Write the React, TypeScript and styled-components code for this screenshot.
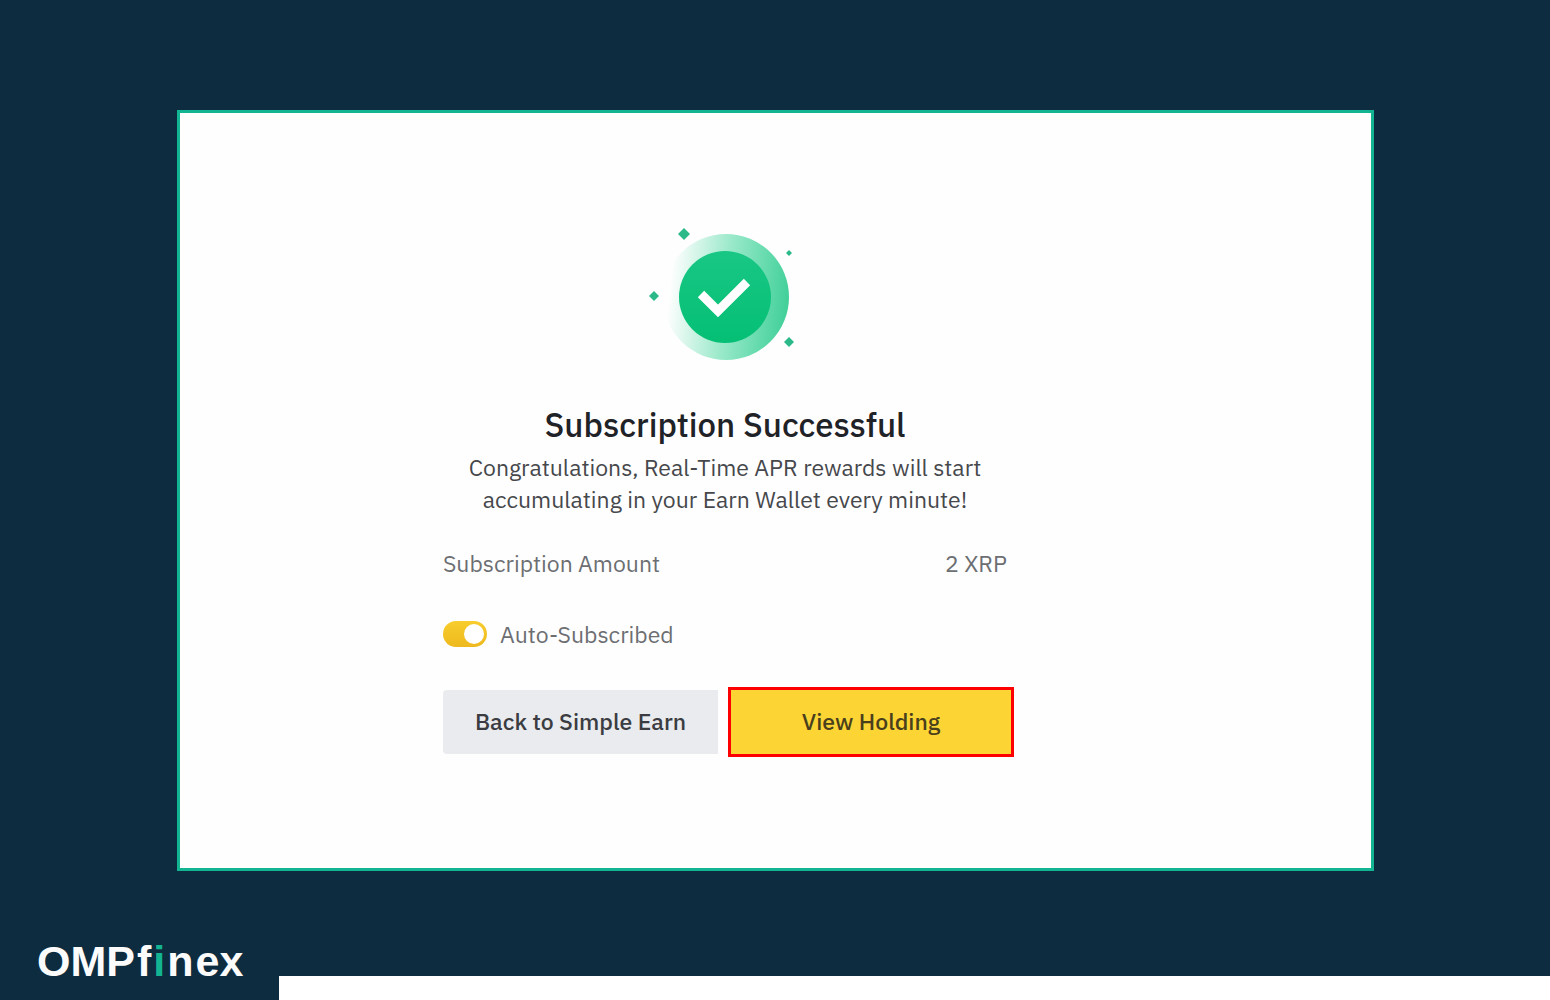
import React from "react";
import styled, { createGlobalStyle } from "styled-components";

const GlobalStyle = createGlobalStyle`
  *, *::before, *::after { box-sizing: border-box; }
  body {
    margin: 0;
    background: #0e2c40;
    font-family: "IBM Plex Sans", "Noto Sans", sans-serif;
  }
`;

const Page = styled.div`
  min-height: 100vh;
  display: flex;
  flex-direction: column;
  justify-content: space-between;
`;

const Main = styled.main`
  padding: 110px 176px 64px 177px;
`;

const Card = styled.section`
  display: flex;
  border: 3px solid #12b491;
  background: #fefefe;
  padding: 106px 32px 111px 263px;
`;

const Content = styled.div`
  flex: 0 1 571px;
  display: flex;
  flex-direction: column;
`;

const Summary = styled.div`
  display: flex;
  flex-direction: column;
  padding-right: 7px;
`;

const Illustration = styled.svg`
  display: block;
  align-self: center;
  width: 170px;
  height: 144px;
  margin-bottom: 42px;
`;

const Title = styled.h1`
  margin: 0 0 6px;
  font-size: 33px;
  font-weight: 500;
  line-height: 40px;
  text-align: center;
  color: #1f2226;
`;

const Message = styled.p`
  margin: 0 0 32px;
  font-size: 23px;
  line-height: 32px;
  text-align: center;
  color: #46484c;
`;

const Row = styled.div<{ $spread?: boolean }>`
  display: flex;
  align-items: center;
  justify-content: ${(p) => (p.$spread ? "space-between" : "flex-start")};
  gap: 13px;
  margin-bottom: ${(p) => (p.$spread ? "39px" : "37px")};
  font-size: 23px;
  line-height: 32px;
  color: #6c6e72;
`;

const Toggle = styled.input`
  appearance: none;
  width: 44px;
  height: 26px;
  margin: 0;
  padding: 3px;
  display: flex;
  justify-content: flex-start;
  border-radius: 13px;
  background: #d4d6da;
  cursor: pointer;
  &::before {
    content: "";
    width: 20px;
    height: 20px;
    border-radius: 50%;
    background: #fff;
  }
  &:checked {
    justify-content: flex-end;
    background: linear-gradient(#f8cd2c, #eeb91e);
  }
`;

const Actions = styled.div`
  display: grid;
  grid-template-columns: 275fr 286fr;
  align-items: center;
  gap: 10px;
`;

const Button = styled.button<{ $primary?: boolean }>`
  height: ${(p) => (p.$primary ? "70px" : "64px")};
  padding: 0 16px 2px;
  border: ${(p) => (p.$primary ? "3px solid #ff0000" : "0")};
  border-radius: ${(p) => (p.$primary ? "0" : "4px 0 0 4px")};
  background: ${(p) => (p.$primary ? "#fcd535" : "#eaebee")};
  color: ${(p) => (p.$primary ? "#4a3f1c" : "#3a3c41")};
  font-family: inherit;
  font-size: 23px;
  font-weight: 500;
  cursor: pointer;
`;

const Footer = styled.footer`
  display: flex;
  align-items: flex-end;
`;

const Brand = styled.a`
  flex: 0 0 279px;
  display: flex;
  gap: 2px;
  height: 64px;
  padding-left: 37px;
  font-family: "Liberation Sans", Arial, sans-serif;
  font-size: 43px;
  font-weight: 700;
  line-height: 50px;
  color: #fbfbfb;
  text-decoration: none;
`;

const BrandAccent = styled.span`
  color: #12b491;
`;

const Strip = styled.div`
  flex: 1;
  height: 24px;
  background: #fff;
`;

const sparks = [
  { x: 44, y: 19, r: 6 },
  { x: 149, y: 38, r: 3 },
  { x: 14, y: 81, r: 5 },
  { x: 149, y: 127, r: 5 },
];

function SuccessIllustration() {
  return (
    <Illustration viewBox="0 4 170 144" aria-hidden="true">
      <defs>
        <linearGradient id="halo" x1="0" y1="0.45" x2="1" y2="0.55">
          <stop offset="0.05" stopColor="#1fcf8b" stopOpacity="0" />
          <stop offset="0.5" stopColor="#1fcf8b" stopOpacity="0.45" />
          <stop offset="1" stopColor="#1fc786" stopOpacity="0.85" />
        </linearGradient>
        <linearGradient id="disc" x1="0" y1="0" x2="0" y2="1">
          <stop offset="0" stopColor="#18c784" />
          <stop offset="1" stopColor="#05bf75" />
        </linearGradient>
      </defs>
      <circle cx="86" cy="82" r="63" fill="url(#halo)" />
      <circle cx="85" cy="82" r="46" fill="url(#disc)" />
      <path d="M61 79 78 96 107 67" fill="none" stroke="#fff" strokeWidth="9" />
      {sparks.map(({ x, y, r }) => (
        <path
          key={`${x}-${y}`}
          d={`M${x} ${y - r}l${r} ${r}-${r} ${r}-${r}-${r}z`}
          fill="#2bb98a"
        />
      ))}
    </Illustration>
  );
}

export default function App() {
  return (
    <Page>
      <GlobalStyle />
      <Main>
        <Card>
          <Content>
            <Summary>
              <SuccessIllustration />
              <Title>Subscription Successful</Title>
              <Message>
                Congratulations, Real-Time APR rewards will start
                <br />
                accumulating in your Earn Wallet every minute!
              </Message>
              <Row $spread>
                <span>Subscription Amount</span>
                <span>2 XRP</span>
              </Row>
              <Row>
                <Toggle type="checkbox" id="auto-subscribe" defaultChecked />
                <label htmlFor="auto-subscribe">Auto-Subscribed</label>
              </Row>
            </Summary>
            <Actions>
              <Button type="button">Back to Simple Earn</Button>
              <Button type="button" $primary>
                View Holding
              </Button>
            </Actions>
          </Content>
        </Card>
      </Main>
      <Footer>
        <Brand href="#" aria-label="OMPfinex">
          <span>OMP</span>
          <span>f</span>
          <BrandAccent>i</BrandAccent>
          <span>n</span>
          <span>ex</span>
        </Brand>
        <Strip />
      </Footer>
    </Page>
  );
}
